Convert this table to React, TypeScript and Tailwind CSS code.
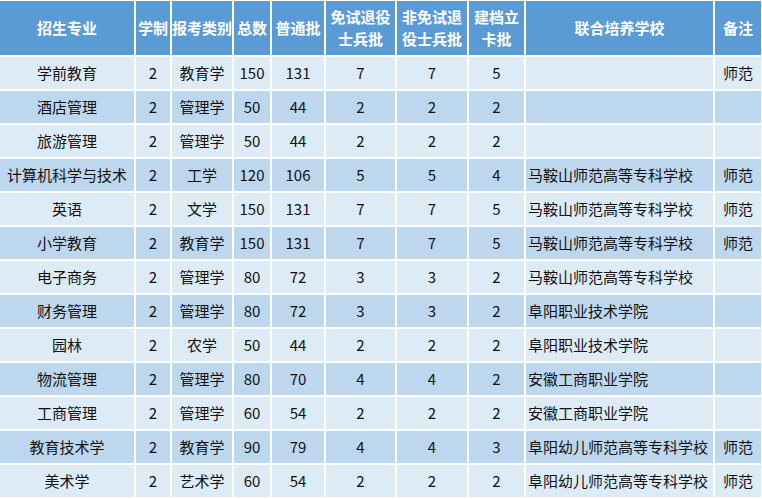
import React from "react";

const cols = "grid-cols-[134px_34px_60px_36px_52px_69px_70px_55px_187px_46px]";

const rows: string[][] = [
  ["学前教育", "2", "教育学", "150", "131", "7", "7", "5", "", "师范"],
  ["酒店管理", "2", "管理学", "50", "44", "2", "2", "2", "", ""],
  ["旅游管理", "2", "管理学", "50", "44", "2", "2", "2", "", ""],
  ["计算机科学与技术", "2", "工学", "120", "106", "5", "5", "4", "马鞍山师范高等专科学校", "师范"],
  ["英语", "2", "文学", "150", "131", "7", "7", "5", "马鞍山师范高等专科学校", "师范"],
  ["小学教育", "2", "教育学", "150", "131", "7", "7", "5", "马鞍山师范高等专科学校", "师范"],
  ["电子商务", "2", "管理学", "80", "72", "3", "3", "2", "马鞍山师范高等专科学校", ""],
  ["财务管理", "2", "管理学", "80", "72", "3", "3", "2", "阜阳职业技术学院", ""],
  ["园林", "2", "农学", "50", "44", "2", "2", "2", "阜阳职业技术学院", ""],
  ["物流管理", "2", "管理学", "80", "70", "4", "4", "2", "安徽工商职业学院", ""],
  ["工商管理", "2", "管理学", "60", "54", "2", "2", "2", "安徽工商职业学院", ""],
  ["教育技术学", "2", "教育学", "90", "79", "4", "4", "3", "阜阳幼儿师范高等专科学校", "师范"],
  ["美术学", "2", "艺术学", "60", "54", "2", "2", "2", "阜阳幼儿师范高等专科学校", "师范"],
];

const headers: React.ReactNode[] = [
  "招生专业",
  "学制",
  "报考类别",
  "总数",
  "普通批",
  <>免试退役<br />士兵批</>,
  <>非免试退<br />役士兵批</>,
  <>建档立<br />卡批</>,
  "联合培养学校",
  "备注",
];

export default function App() {
  return (
    <div
      className="w-[762px] h-[499px] bg-white overflow-hidden pt-[1px]"
      style={{ fontFamily: '"Noto Sans CJK SC", "Noto Sans", sans-serif' }}
    >
      <div className={`grid ${cols} gap-x-[2px] h-[54px]`}>
        {headers.map((h, i) => (
          <div
            key={i}
            className="bg-[#5b9bd5] text-white font-bold text-[15px] leading-[22px] flex items-center justify-center text-center whitespace-nowrap"
          >
            {h}
          </div>
        ))}
      </div>
      <div className="h-[2px]" />
      <div className="flex flex-col gap-y-[2px]">
        {rows.map((r, ri) => (
          <div key={ri} className={`grid ${cols} gap-x-[2px] h-[32px]`}>
            {r.map((c, ci) => (
              <div
                key={ci}
                className={`${ri % 2 === 0 ? "bg-[#ddebf7]" : "bg-[#bdd7ee]"} text-[#111] text-[15px] flex items-center whitespace-nowrap ${
                  ci === 8 ? "justify-start pl-[2px]" : "justify-center"
                }`}
              >
                {c}
              </div>
            ))}
          </div>
        ))}
      </div>
    </div>
  );
}
